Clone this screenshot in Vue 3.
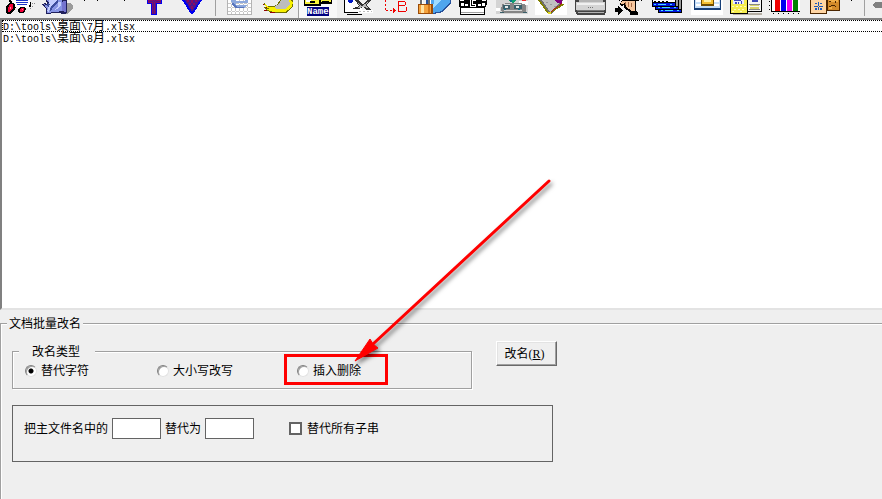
<script setup>
import { ref } from "vue";

const files = ref([
  [["D:\\tools\\", false], ["桌面", true], ["\\7", false], ["月", true], [".xlsx", false]],
  [["D:\\tools\\", false], ["桌面", true], ["\\8", false], ["月", true], [".xlsx", false]],
]);
const selected = ref(0);

const mode = ref("replace");
const search = ref("");
const replacement = ref("");
const replaceAll = ref(false);

// All icons share one strip; x is where the button's slice starts.
const tools = [
  {
    name: "购物车", x: 0, w: 39,
    shapes: [
      ["#000", "M9 0h2l4 7h14v1h-14l-1 3h-2zM29 2h2v5h-2z"],
      ["#fff", "M12 0h18v2l-1 6H16z"],
      ["#1c35c9", "M16 0h12v1h-12zM16 2h12v1h-12zM17 4h10v1h-10z"],
      ["#888", "M32 3h1v1h-1zM34 3h1v1h-1zM30 8h1v1h-1zM32 6h1v1h-1z"],
      ["#000", "M9 3h5l1 2v4l-2 3-3 2H7l-1-2V8l1-3zM20 7h5l1 2-1 3-3 1h-3l-1-2 1-3z"],
      ["#f00038", "M10 4h3v4l-3 4H8V8zM21 8h3v2l-2 2h-2V9z"],
      ["#ff8aa8", "M10 7h1v2h-1zM22 9h1v1h-1z"],
    ],
  },
  {
    name: "帮助", x: 39, w: 39,
    shapes: [
      ["#9b9b9b", "M66 3h4l3 3v3l-6 5h-4z"],
      ["#20205c", "M46 0h21v13l-2 1-9-1-10 1v-5l-4-5 3-1 2 1z"],
      ["#8794e4", "M47 0h15v11l-7 1-8 1v-4l-3-5 4 2 1-3z"],
      ["#c3cdff", "M49 0h8l-6 6-2 6-2-1 2-5zM58 2h3v4l-4 3-3 1 4-4z"],
      ["#3c4d9d", "M57 0h1v2l-6 6-1 4-1-1 1-5zM48 3l2 1-1 3-2-1z"],
      ["#7474cf", "M63 1h3v11l-4-1v-8z"],
    ],
  },
  {
    name: "更多", x: 78, w: 56,
    shapes: [["#000", "M84 0h1v1h-1zM97 0h1v1h-1zM124 0h1v1h-1z"]],
  },
  {
    name: "上移", x: 134, w: 39,
    shapes: [
      ["#0000f0", "M147 0h15v4h-5v11h-6V4h-4z"],
      ["#8b0a62", "M148 0h13v3h-5v11h-4V3h-4z"],
      ["#4b168c", "M153 0h1v14h-1zM155 0h1v14h-1zM149 1h12v1h-12z"],
    ],
  },
  {
    name: "下移", x: 173, w: 39,
    shapes: [
      ["#0000f0", "M182 0h20l-9 14h-2z"],
      ["#4b168c", "M185 0h15l-8 12z"],
      ["#8b0a62", "M187 0h2v2h-2zM191 0h2v3h-2zM195 0h2v2h-2zM189 3h2v2h-2zM193 3h2v2h-2zM191 6h2v3h-2z"],
    ],
  },
  { separator: true, name: "s1" },
  {
    name: "网页", x: 220, w: 39,
    shapes: [
      ["#b4b4b4", "M227 0h25v15h-25z"],
      ["#fff", "M228 0h23v14h-23z"],
      ["#c8c8c8", "M231 0h1v14h-1zM235 0h1v14h-1zM239 0h1v14h-1zM243 0h1v14h-1zM247 0h1v14h-1zM228 3h23v1h-23zM228 7h23v1h-23zM228 11h23v1h-23z"],
      ["#8da8dc", "M231 0h5v1h9V0h3v3h-12v2h11l-3 3h-8l-4-4z"],
      ["#5875bd", "M232 3h2l3 4h7v1h-8l-4-3z"],
    ],
  },
  {
    name: "拖动", x: 259, w: 39,
    shapes: [
      ["#707000", "M264 3l4 3h4l5-1 3-5h13v6l-6 7h-14l-5-2-5-4h4l-3-2z"],
      ["#f8f000", "M265 4l4 3h5l6-2 1-5h10l2 3-2 5-6 4h-12l-7-3h4l-5-3z"],
      ["#bdbdbd", "M279 4l2-4h8l1 4-4 5h-10l-2-2z"],
      ["#900000", "M263 4h1v1h-1zM266 7h1v1h-1zM264 10h3v1h-3zM270 12h5v1h-5z"],
    ],
  },
  {
    name: "改名", x: 298, w: 39, pressed: true,
    shapes: [
      ["#000", "M304 0h28v4h-11v2h-17z"],
      ["#f8f33b", "M305 0h14v4h-14zM321 0h10v2h-10z"],
      ["#fff", "M306 0h5v2h-5z"],
      ["#000", "M310 1h5v2h-5zM322 1h7v1h-7z"],
      ["#000080", "M307 7h22v9h-22z"],
    ],
    text: "Name",
  },
  {
    name: "剪切", x: 337, w: 39,
    shapes: [
      ["#000", "M344 0h1v12h13v1h-14zM347 14h15v1h-15z"],
      ["#fff", "M345 0h13l4 6v6h-17z"],
      ["#0018c8", "M348 0h5v2h-1v1h-3V2h-1z"],
      ["#333", "M355 0h3l5 4 5-4h3l-5 5 6 5h-5l-4-3-4 2h-7l7-3z"],
      ["#b9b9b9", "M358 3l4 3 6-4-3 3 3 3-4-1-7 1 3-2z"],
      ["#fff", "M358 10h15v3h-15z"],
      ["#bbb", "M359 11h2v1h-2zM363 11h2v1h-2zM367 11h2v1h-2zM371 11h1v1h-1z"],
    ],
  },
  {
    name: "转换", x: 376, w: 39,
    shapes: [
      ["#f00000", "M385 0h1v2h-1zM385 4h1v2h-1zM385 8h1v2h-1zM386 10h2v1h-2zM390 10h2v1h-2zM393 8h1v1h1v1h1v1h-1v1h-1v1h-1z"],
      ["#f00000", "M398 1h7v1h1v3h-1v1h1v1h1v4h-1v1h-8zM399 2v3h6V2zM399 6v5h7V6z"],
    ],
  },
  {
    name: "加密", x: 415, w: 39,
    shapes: [
      ["#26519a", "M426 0h25v3l-8 9-10 2-7-7z"],
      ["#4fa6ee", "M428 0h22v2l-8 9-9 2z"],
      ["#a0dcff", "M434 0h7l-8 8z"],
      ["#6a6a6a", "M420 0h2v5h-2zM428 0h2v5h-2z"],
      ["#fff", "M422 0h1v4h-1zM430 0h1v4h-1z"],
      ["#9a4b08", "M418 4h15v10h-15z"],
      ["#f5a33d", "M419 5h12v8h-12z"],
      ["#ffe3a3", "M421 5h3v8h-3z"],
      ["#d27618", "M428 5h2v8h-2z"],
    ],
  },
  {
    name: "胶片", x: 454, w: 39,
    shapes: [
      ["#000", "M459 0h28v3l-1 4h-1v8h-25V7h-1z"],
      ["#fff", "M461 8h23v4h-23zM461 13h23v1h-23z"],
      ["#fff", "M461 3h3v3h-3zM465 4h3v2h-3zM478 4h3v2h-3zM482 3h3v3h-3zM460 0h4v1h-4zM482 0h4v1h-4z"],
      ["#000", "M468 0h10v8h-10z"],
      ["#fff", "M470 0h1v6h4V5h1v2h-6zM472 0h4v1h-3v3h3v1h-4z"],
      ["#a0a0a0", "M461 12h23v1h-23z"],
    ],
  },
  {
    name: "图像", x: 493, w: 39,
    shapes: [
      ["#d4d4d4", "M496 0h32v14h-32z"],
      ["#fff", "M519 1h9v4h-9zM496 8h4v3h-4z"],
      ["#858585", "M502 4l5-1h14l5 2v7l-4 1h-17l-4-2z"],
      ["#d9d9d9", "M504 4h6v1h-6zM514 4h7v1h-7zM504 10h18v1h-18z"],
      ["#3b5f69", "M503 5h7v4h-7zM514 5h8v4h-8zM500 12h4v1h-4zM523 12h4v1h-4z"],
      ["#e4e9e9", "M505 6h3v2h-3zM516 6h3v2h-3z"],
      ["#10a070", "M508 0h9l-3 2-1 2-2-2z"],
      ["#0f718c", "M510 0h2v2h-2zM504 9h2v1h-2zM518 9h2v1h-2z"],
      ["#f03030", "M522 0h4v1h-4z"],
    ],
  },
  {
    name: "画图", x: 532, w: 39,
    shapes: [
      ["#fff", "M535 0h32v15h-32z"],
      ["#707070", "M539 0h24l-2 5-10 9-3-1z"],
      ["#c0c0c0", "M542 0h14l3 4-9 8z"],
      ["#9a9a9a", "M546 2h2v1h-2zM550 4h2v1h-2zM554 6h2v1h-2z"],
      ["#800080", "M555 0h7v4l-5-1-2-2z"],
      ["#808000", "M538 0h2l10 14h-2zM562 4h3l-14 9-1-1z"],
      ["#b01818", "M562 3h1l-12 9v-1z"],
      ["#e5db20", "M548 12h3v2h-3z"],
    ],
  },
  {
    name: "打印", x: 571, w: 39,
    shapes: [
      ["#444", "M575 0h31v11l-1 4h-28l-2-4z"],
      ["#d4d4d4", "M576 2h29v8h-29z"],
      ["#b4b4b4", "M579 0h24v2h-24zM578 12h26v1h-26z"],
      ["#f0f0f0", "M577 3h27v2h-27z"],
      ["#777", "M588 7h1v1h-1zM590 7h1v1h-1zM592 7h1v1h-1zM577 10h27v1h-27z"],
    ],
  },
  {
    name: "导出", x: 610, w: 39,
    shapes: [
      ["#000", "M615 8h3V6l5 4-5 5v-3h-3zM619 0h1v1h-1zM641 0h1v1h-1z"],
      ["#000", "M622 0h17v1h-3v10l2 1v3h-8v-3l-6-4V5l-3 1-1-2z"],
      ["#f5c69e", "M622 1h13v10h-3l-6-4V3l-5 1z"],
      ["#a66945", "M625 2h1v3h-1zM628 2h1v5h-1zM631 3h1v4h-1z"],
    ],
  },
  {
    name: "窗口", x: 649, w: 39,
    shapes: [
      ["#999", "M675 0h6v9h-6z"],
      ["#000", "M652 0h24v7h-24z"],
      ["#000", "M655 6h24v4h-24z"],
      ["#000", "M658 9h24v4h-24zM678 0h1v7h-1zM681 0h1v9h-1z"],
      ["#fff", "M653 0h22v2h-22z"],
      ["#000", "M654 1h2v1h-2zM658 1h2v1h-2zM662 1h2v1h-2zM666 1h2v1h-2z"],
      ["#0018e0", "M653 3h22v3h-22zM656 7h22v2h-22zM659 10h22v2h-22z"],
      ["#46d9ff", "M654 4h2v1h-2zM658 4h8v1h-8zM670 4h2v1h-2zM658 7h2v1h-2zM662 7h8v1h-8zM674 7h2v1h-2zM661 10h2v1h-2zM665 10h8v1h-8zM677 10h2v1h-2z"],
    ],
  },
  {
    name: "表格", x: 688, w: 39,
    shapes: [
      ["#fff", "M691 0h32v15h-32z"],
      ["#173f78", "M694 0h27v10h-27z"],
      ["#c6dff8", "M695 0h25v8h-25z"],
      ["#fff", "M696 0h5v2h-5zM696 4h5v2h-5zM714 0h5v2h-5zM714 4h5v2h-5z"],
      ["#704d00", "M701 0h13v6h-13z"],
      ["#f5bf32", "M702 0h11v4h-11z"],
      ["#fff0a0", "M704 0h7v2h-7z"],
    ],
  },
  {
    name: "比较", x: 727, w: 39,
    shapes: [
      ["#b5afa5", "M733 13h29v2h-29z"],
      ["#000", "M730 0h32v12h-14v2h-18z"],
      ["#f5ed50", "M731 0h16v13h-16z"],
      ["#fffbc0", "M732 6h2v1h-2zM736 6h2v1h-2zM740 6h2v1h-2zM744 6h2v1h-2zM734 9h2v1h-2zM738 9h2v1h-2zM742 9h2v1h-2zM732 11h2v1h-2zM740 11h2v1h-2z"],
      ["#f5f5f5", "M748 0h13v11h-13z"],
      ["#e8eaff", "M733 0h11v4h-11z"],
      ["#3b45b8", "M734 0h7v1h-7zM735 2h2v2h-2zM738 2h1v2h-1zM741 1h1v3h-1zM752 0h6v2h-6z"],
      ["#d8d26a", "M750 5h9v1h-9zM750 7h9v2h-9z"],
      ["#888", "M749 4h11v1h-11zM749 9h11v1h-11z"],
    ],
  },
  {
    name: "图表", x: 766, w: 39,
    shapes: [
      ["#fff", "M772 0h28v11h-28z"],
      ["#000", "M771 0h1v11h28v1h-29zM769 1h1v1h-1zM769 5h1v1h-1zM769 9h1v1h-1zM773 13h1v1h-1zM778 13h1v1h-1zM783 13h1v1h-1zM788 13h1v1h-1zM793 13h1v1h-1zM798 13h1v1h-1z"],
      ["#f00000", "M775 0h5v11h-5z"],
      ["#0000f0", "M781 0h5v11h-5z"],
      ["#f000f0", "M787 0h5v11h-5z"],
      ["#008000", "M793 0h5v11h-5z"],
    ],
  },
  {
    name: "设置", x: 805, w: 39,
    shapes: [
      ["#4b2500", "M810 0h30v11h-13v3h-17z"],
      ["#ffd5a3", "M811 0h15v13h-15z"],
      ["#d28a2a", "M828 0h11v10h-11z"],
      ["#f0ad48", "M829 0h9v2h-9zM829 7h3v2h-3z"],
      ["#1c58b9", "M818 2h1v8h-1zM814 6h9v1h-9zM815 3h2v1h-2zM820 3h2v1h-2zM815 8h2v2h-2zM820 8h2v2h-2z"],
      ["#4b2500", "M829 1h2v1h-2zM835 1h1v2h-1zM829 6h2v1h-2zM831 5h4v1h-4zM835 6h1v1h-1z"],
    ],
  },
  {
    name: "选项", x: 844, w: 17,
    shapes: [["#000", "M851 0h1v1h-1z"]],
  },
  { separator: true, name: "s2" },
  {
    name: "返回", x: 869, w: 39,
    shapes: [["#808080", "M872 5l4-3h20v6h-20z"]],
  },
];

function rename() {
  if (!search.value && mode.value === "replace") return;
  console.log("RENAME:", {
    mode: mode.value,
    search: search.value,
    replacement: replacement.value,
    all: replaceAll.value,
  });
}
</script>

<template>
  <div class="window">
    <div class="toolbar">
      <template v-for="t in tools" :key="t.name">
        <span v-if="t.separator" class="separator"></span>
        <button v-else type="button" class="tool" :class="{ pressed: t.pressed }" :aria-label="t.name">
          <svg :width="t.w" height="18" :viewBox="`${t.x} 0 ${t.w} 18`">
            <path v-for="([fill, d], i) in t.shapes" :key="i" :fill="fill" :d="d" fill-rule="evenodd" />
            <text v-if="t.text" x="307" y="14" class="caption">{{ t.text }}</text>
          </svg>
        </button>
      </template>
    </div>

    <ul class="files">
      <li
        v-for="(parts, i) in files"
        :key="i"
        :class="{ selected: selected === i }"
        @click="selected = i"
      ><span v-for="([text, cjk], n) in parts" :key="n" :class="cjk ? 'cjk' : 'latin'">{{ text }}</span></li>
    </ul>

    <fieldset class="panel">
      <legend>文档批量改名</legend>

      <div class="top">
        <fieldset class="types">
          <legend>改名类型</legend>
          <div class="options">
            <label><input v-model="mode" type="radio" name="mode" value="replace" />替代字符</label>
            <label><input v-model="mode" type="radio" name="mode" value="case" />大小写改写</label>
            <label class="marked">
              <input v-model="mode" type="radio" name="mode" value="insert" />插入删除
              <span class="frame"></span>
              <svg class="arrow" width="215" height="205" viewBox="0 0 215 205">
                <path d="M202 11L26 174" stroke="#f00" stroke-width="3" stroke-linecap="round" />
                <path d="M8 191L23 169L26 174L31 178Z" fill="#f00" stroke="#f00" stroke-linejoin="round" />
              </svg>
            </label>
          </div>
        </fieldset>
        <button type="button" class="rename" @click="rename">改名<span class="key">(<u>R</u>)</span></button>
      </div>

      <div class="replace">
        <label for="search">把主文件名中的</label>
        <input id="search" v-model="search" type="text" />
        <label for="replacement">替代为</label>
        <input id="replacement" v-model="replacement" type="text" />
        <label class="all"><input v-model="replaceAll" type="checkbox" />替代所有子串</label>
      </div>
    </fieldset>
  </div>
</template>

<style>
body {
  margin: 0;
  background: #efefef;
}
</style>

<style scoped>
.window {
  display: flex;
  flex-direction: column;
  min-height: 100vh;
  overflow: hidden;
  background: #efefef;
  color: #000;
  font: 12px/18px "Liberation Sans", "Noto Sans CJK SC", sans-serif;
}

.toolbar {
  display: flex;
  height: 18px;
  overflow: hidden;
}

.tool {
  flex: none;
  padding: 0;
  border: none;
  background: none;
}

.tool svg {
  display: block;
  shape-rendering: crispEdges;
}

.pressed {
  background: #f8f8f8;
  box-shadow: inset 1px 0 #a0a0a0;
}

.caption {
  fill: #fff;
  font: bold 9px "Liberation Mono", monospace;
}

.separator {
  flex: none;
  width: 1px;
  height: 16px;
  margin: 0 4px 0 3px;
  background: #a0a0a0;
}

.files {
  flex: 1;
  margin: 0;
  padding: 0;
  list-style: none;
  background: #fff;
  border-style: solid;
  border-width: 2px 0 2px 2px;
  border-color: #808080 #fff #e3e3e3 #808080;
}

.files li {
  display: flex;
  align-items: baseline;
  box-sizing: border-box;
  height: 12px;
  border: 1px dotted transparent;
  border-right: none;
}

.files .selected {
  border-color: #000;
}

.latin {
  font: 10px/8px "Liberation Mono", monospace;
}

.cjk {
  font: 12px/8px "Noto Sans CJK SC", sans-serif;
}

fieldset {
  min-width: 0;
  margin: 0;
  border: 1px solid #a0a0a0;
  box-shadow: 1px 1px #fff, inset 1px 1px #fff;
}

legend {
  height: 18px;
  background: #efefef;
  line-height: 20px;
}

.panel {
  margin-top: 4px;
  padding: 9px 11px 37px 6px;
  border-width: 1px 0 0 1px;
}

.panel > legend {
  padding: 0 2px;
}

.top {
  display: flex;
  align-items: flex-start;
  gap: 24px;
  padding-left: 5px;
}

.types {
  flex: 0 1 460px;
  box-sizing: border-box;
  margin-top: 1px;
  padding: 0 12px 6px 6px;
}

.types legend {
  padding: 0 15px 0 13px;
}

.options {
  display: grid;
  grid-template-columns: 132px 140px auto;
  padding-left: 6px;
}

.options label {
  display: flex;
  align-items: center;
  justify-self: start;
  gap: 4px;
  height: 22px;
  white-space: nowrap;
}

input {
  appearance: none;
  flex: none;
  box-sizing: border-box;
  margin: 0;
  background: #fff;
}

input[type="radio"] {
  width: 12px;
  height: 12px;
  border: 1px solid;
  border-color: #808080 #e3e3e3 #e3e3e3 #808080;
  border-radius: 50%;
  box-shadow: inset 1px 1px #a0a0a0;
}

input[type="radio"]:checked {
  background: radial-gradient(circle, #000 2px, #fff 3px);
}

.marked {
  position: relative;
}

.frame {
  position: absolute;
  inset: -6px -27px -3px -13px;
  border: 3px solid #f00;
}

.arrow {
  position: absolute;
  left: 50px;
  top: -190px;
  pointer-events: none;
  filter: drop-shadow(2px 3px 2px rgba(0, 0, 0, 0.5));
}

.rename {
  width: 61px;
  height: 25px;
  padding: 0 4px 0 0;
  border: 1px solid;
  border-color: #fff #696969 #696969 #fff;
  box-shadow: inset -1px -1px #a0a0a0, inset 1px 1px #e3e3e3;
  background: #efefef;
  color: #000;
  font: inherit;
}

.key {
  font-family: "Liberation Serif", serif;
}

.replace {
  display: flex;
  align-items: center;
  gap: 4px;
  box-sizing: border-box;
  max-width: 541px;
  margin: 16px 0 0 5px;
  padding: 12px 11px 22px;
  border: 1px solid #646464;
  white-space: nowrap;
}

input[type="text"] {
  width: 49px;
  height: 21px;
  padding: 0 2px;
  border: 1px solid #646464;
  font: inherit;
}

.all {
  display: flex;
  align-items: center;
  gap: 5px;
  margin-left: 31px;
}

input[type="checkbox"] {
  width: 13px;
  height: 13px;
  border: 2px solid #646464;
}

input[type="checkbox"]:checked {
  background: #000;
  box-shadow: inset 0 0 0 2px #fff;
}
</style>
